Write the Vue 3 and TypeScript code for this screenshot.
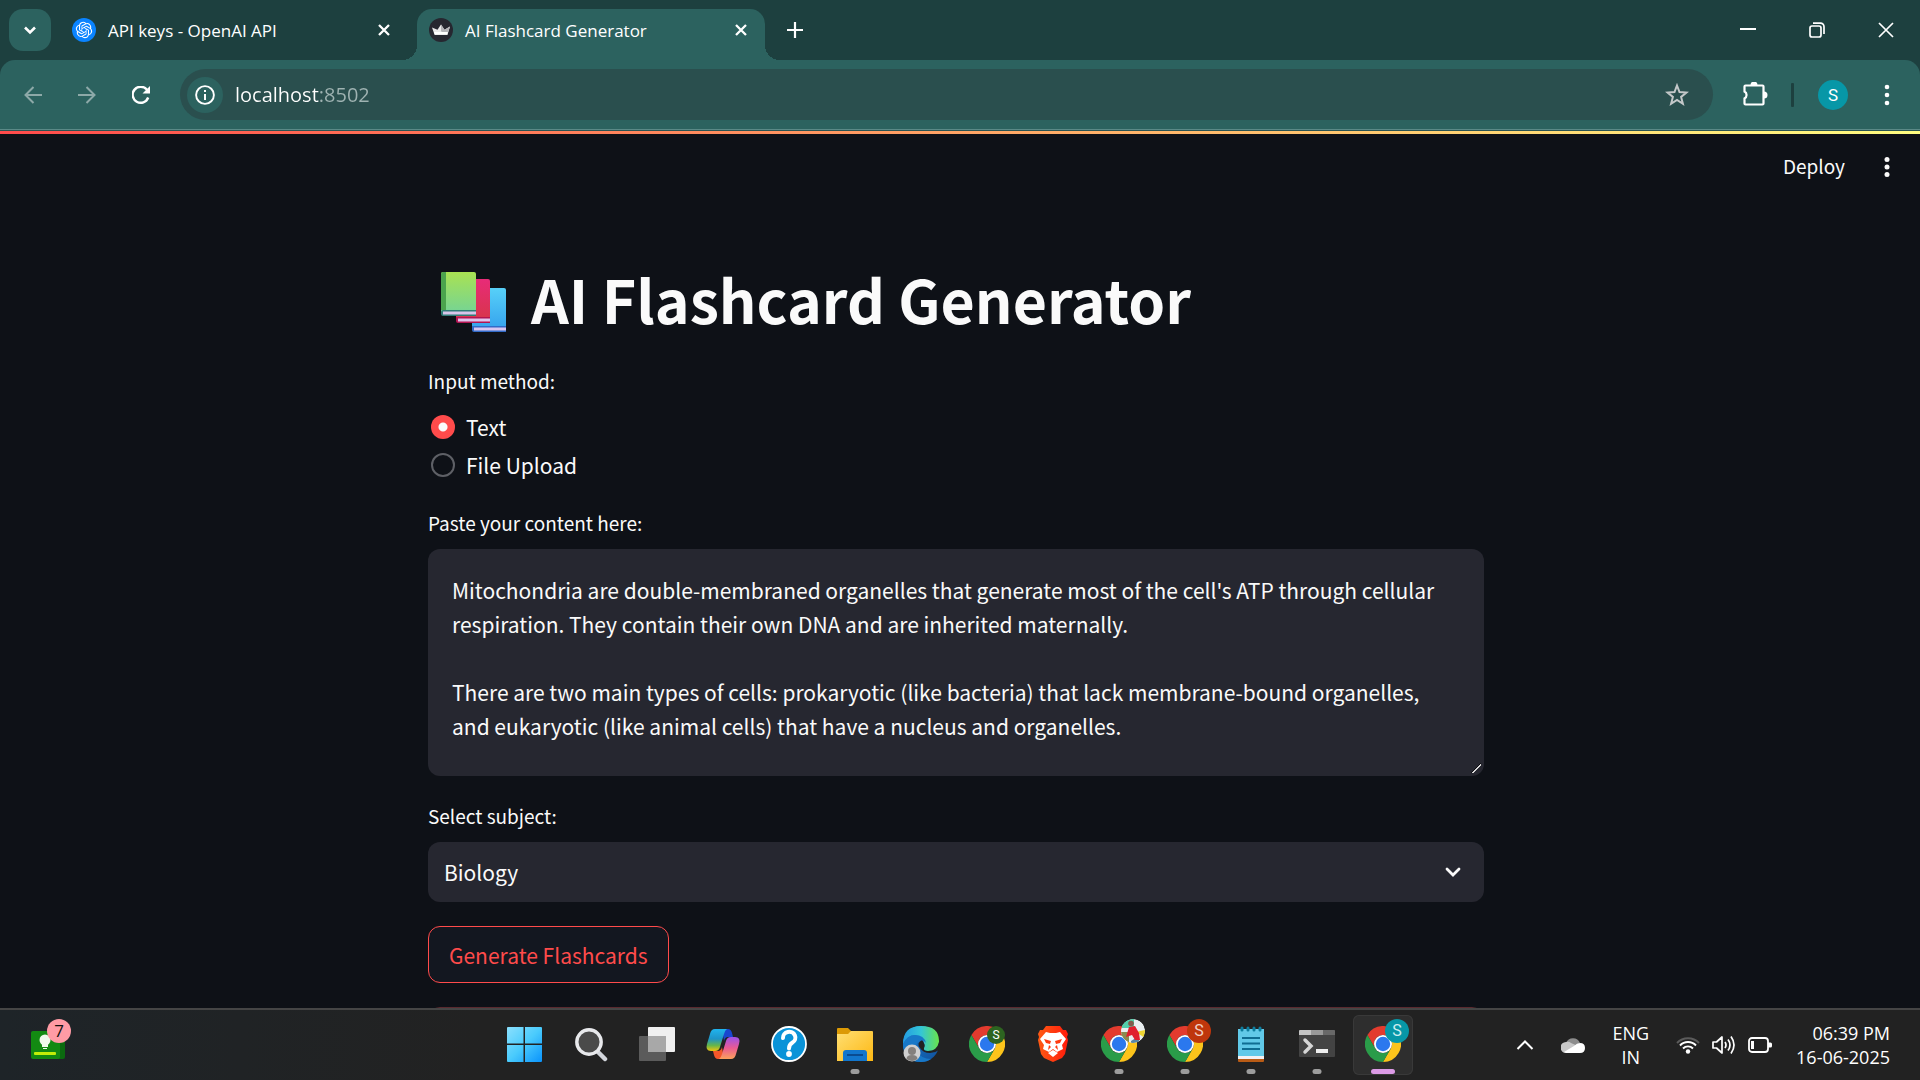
<script setup lang="ts">
import { ref } from 'vue'

interface TaskItem {
  id: string
  label: string
  running?: boolean
  active?: boolean
  badge?: string
  badgeClass?: string
}

const address = ref('localhost:8502')
const method = ref('Text')
const methods: string[] = ['Text', 'File Upload']
const subject = ref('Biology')
const content = ref(
  "Mitochondria are double-membraned organelles that generate most of the cell's ATP through cellular respiration. They contain their own DNA and are inherited maternally.\n\nThere are two main types of cells: prokaryotic (like bacteria) that lack membrane-bound organelles, and eukaryotic (like animal cells) that have a nucleus and organelles."
)

const tasks: TaskItem[] = [
  { id: 'start', label: 'Start' },
  { id: 'search', label: 'Search' },
  { id: 'views', label: 'Task view' },
  { id: 'copilot', label: 'Copilot' },
  { id: 'help', label: 'Get help' },
  { id: 'folder', label: 'File Explorer', running: true },
  { id: 'edge', label: 'Edge' },
  { id: 'chrome', label: 'Chrome', badge: 'S', badgeClass: 'small' },
  { id: 'brave', label: 'Brave' },
  { id: 'chrome', label: 'Chrome, photo profile', running: true, badge: 'photo', badgeClass: 'photo' },
  { id: 'chrome', label: 'Chrome, second profile', running: true, badge: 'S', badgeClass: 'rust' },
  { id: 'notepad', label: 'Notepad', running: true },
  { id: 'terminal', label: 'Terminal', running: true },
  { id: 'chrome', label: 'Chrome, current profile', running: true, active: true, badge: 'S', badgeClass: 'teal' }
]
</script>

<template>
  <div class="screen">
    <header class="browser">
      <div class="strip">
        <button class="tab-search" aria-label="Search tabs">
          <svg width="16" height="16" viewBox="0 0 16 16"><path d="M3 5.500l5 5 5-5" fill="none" stroke="#fff" stroke-width="2.600" /></svg>
        </button>
        <div class="tab">
          <svg class="favicon" viewBox="0 0 24 24">
            <circle cx="12" cy="12" r="12" fill="#0a84ff" />
            <g transform="translate(3.800 3.800) scale(.683)"><path fill="#fff" d="M22.2819 9.8211a5.9847 5.9847 0 0 0-.5157-4.9108 6.0462 6.0462 0 0 0-6.5098-2.9A6.0651 6.0651 0 0 0 4.9807 4.1818a5.9847 5.9847 0 0 0-3.9977 2.9 6.0462 6.0462 0 0 0 .7427 7.0966 5.98 5.98 0 0 0 .511 4.9107 6.051 6.051 0 0 0 6.5146 2.9001A5.9847 5.9847 0 0 0 13.2599 24a6.0557 6.0557 0 0 0 5.7718-4.2058 5.9894 5.9894 0 0 0 3.9977-2.9001 6.0557 6.0557 0 0 0-.7475-7.0729zm-9.022 12.6081a4.4755 4.4755 0 0 1-2.8764-1.0408l.1419-.0804 4.7783-2.7582a.7948.7948 0 0 0 .3927-.6813v-6.7369l2.02 1.1686a.071.071 0 0 1 .038.052v5.5826a4.504 4.504 0 0 1-4.4945 4.4944zm-9.6607-4.1254a4.4708 4.4708 0 0 1-.5346-3.0137l.142.0852 4.783 2.7582a.7712.7712 0 0 0 .7806 0l5.8428-3.3685v2.3324a.0804.0804 0 0 1-.0332.0615L9.74 19.9502a4.4992 4.4992 0 0 1-6.1408-1.6464zM2.3408 7.8956a4.485 4.485 0 0 1 2.3655-1.9728V11.6a.7664.7664 0 0 0 .3879.6765l5.8144 3.3543-2.0201 1.1685a.0757.0757 0 0 1-.071 0l-4.8303-2.7865A4.504 4.504 0 0 1 2.3408 7.872zm16.5963 3.8558L13.1038 8.364 15.1192 7.2a.0757.0757 0 0 1 .071 0l4.8303 2.7913a4.4944 4.4944 0 0 1-.6765 8.1042v-5.6772a.79.79 0 0 0-.407-.667zm2.0107-3.0231l-.142-.0852-4.7735-2.7818a.7759.7759 0 0 0-.7854 0L9.409 9.2297V6.8974a.0662.0662 0 0 1 .0284-.0615l4.8303-2.7866a4.4992 4.4992 0 0 1 6.6802 4.66zM8.3065 12.863l-2.02-1.1638a.0804.0804 0 0 1-.038-.0567V6.0742a4.4992 4.4992 0 0 1 7.3757-3.4537l-.142.0805L8.704 5.459a.7948.7948 0 0 0-.3927.6813zm1.0976-2.3654l2.602-1.4998 2.6069 1.4998v2.9994l-2.5974 1.4997-2.6067-1.4997Z" /></g>
          </svg>
          <span class="tab-title">API keys - OpenAI API</span>
          <button class="tab-close" aria-label="Close tab">
            <svg width="12" height="12" viewBox="0 0 12 12"><path d="M1 1l10 10M11 1L1 11" stroke="#fff" stroke-width="2.300" /></svg>
          </button>
        </div>
        <div class="tab current">
          <svg class="favicon" viewBox="0 0 24 24">
            <circle cx="12" cy="12" r="12" fill="#262730" />
            <path d="M3 9.500l5.500 2.200L12 6.500l3.500 5.200L21 8.500l-2.600 8.300H5.600z" fill="#e9e9ea" />
            <path d="M21 8.500l-5.500 3.200L12 6.500V13l3 3.800h3.400z" fill="#b4b4b8" />
            <path d="M5 14h14l-.8 2.800H5.800z" fill="#fff" />
          </svg>
          <span class="tab-title">AI Flashcard Generator</span>
          <button class="tab-close" aria-label="Close tab">
            <svg width="12" height="12" viewBox="0 0 12 12"><path d="M1 1l10 10M11 1L1 11" stroke="#fff" stroke-width="2.300" /></svg>
          </button>
        </div>
        <button class="new-tab" aria-label="New tab">
          <svg width="16" height="16" viewBox="0 0 16 16"><path d="M8 0v16M0 8h16" stroke="#fff" stroke-width="2.200" /></svg>
        </button>
        <div class="window-buttons">
          <button aria-label="Minimize"><svg width="16" height="16" viewBox="0 0 16 16"><path d="M0 7h16" stroke="#fff" stroke-width="2" /></svg></button>
          <button aria-label="Restore"><svg width="16" height="16" viewBox="0 0 16 16" fill="none" stroke="#fff" stroke-width="1.700"><rect x="1" y="4" width="11" height="11" rx="2" /><path d="M4 1.200h7.500a3.500 3.500 0 0 1 3.500 3.500V12" /></svg></button>
          <button aria-label="Close"><svg width="16" height="16" viewBox="0 0 16 16"><path d="M1 1l14 14M15 1L1 15" stroke="#fff" stroke-width="1.700" /></svg></button>
        </div>
      </div>
      <div class="toolbar">
        <button class="nav dim" aria-label="Back"><svg width="18" height="18" viewBox="0 0 18 18" fill="none" stroke="#8da9a8" stroke-width="2"><path d="M18 9H1.500M9.500 1L1.500 9l8 8" /></svg></button>
        <button class="nav dim" aria-label="Forward"><svg width="18" height="18" viewBox="0 0 18 18" fill="none" stroke="#8da9a8" stroke-width="2"><path d="M0 9h16.500M8.500 1l8 8-8 8" /></svg></button>
        <button class="nav" aria-label="Reload"><svg width="18" height="18" viewBox="0 0 18 18"><path d="M16.200 11.500A8 8 0 1 1 14.800 3.600L17 6" fill="none" stroke="#fff" stroke-width="2.400" /><path d="M18 0v7.500h-7.500z" fill="#fff" /></svg></button>
        <div class="address">
          <button class="site-info" aria-label="Site information"><svg width="20" height="20" viewBox="0 0 20 20"><circle cx="10" cy="10" r="8.900" fill="none" stroke="#fff" stroke-width="1.900" /><path d="M9 9h2v6H9zM9 5h2v2H9z" fill="#fff" /></svg></button>
          <input v-model="address" class="url" type="text" aria-label="Address" />
          <button class="star" aria-label="Bookmark"><svg width="24" height="24" viewBox="0 0 24 24"><path d="M12 2.500l2.500 6.500 7 .5-5.400 4.400 1.800 6.900-5.900-3.800-5.900 3.800 1.800-6.900L2.500 9.500l7-.5z" fill="none" stroke="#c4c8c9" stroke-width="2" /></svg></button>
        </div>
        <button class="puzzle" aria-label="Extensions"><svg width="26" height="26" viewBox="0 0 26 26"><path d="M3.500 3.500h17a1 1 0 0 1 1 1v17a1 1 0 0 1-1 1h-17a1 1 0 0 1-1-1v-5a4 4 0 0 0 0-7v-5a1 1 0 0 1 1-1z" fill="none" stroke="#fff" stroke-width="2.200" /><path d="M8.500 3a3.500 3.500 0 0 1 7 0zM22 9.500a3.500 3.500 0 0 1 0 7z" fill="#fff" /></svg></button>
        <span class="divider"></span>
        <button class="avatar" aria-label="Profile">S</button>
        <button class="menu" aria-label="Browser menu"><svg width="6" height="22" viewBox="0 0 6 22" fill="#fff"><circle cx="3" cy="3" r="2.300" /><circle cx="3" cy="11" r="2.300" /><circle cx="3" cy="19" r="2.300" /></svg></button>
      </div>
    </header>

    <main class="page">
      <div class="decoration"></div>
      <div class="app-bar">
        <button class="deploy">Deploy</button>
        <button class="app-menu" aria-label="Main menu"><svg width="6" height="22" viewBox="0 0 6 22" fill="#fafafa"><circle cx="3" cy="3.500" r="2.500" /><circle cx="3" cy="11" r="2.500" /><circle cx="3" cy="18.500" r="2.500" /></svg></button>
      </div>
      <form class="block" @submit.prevent>
        <h1>
          <svg class="books" width="66" height="62" viewBox="0 0 66 62">
            <defs>
              <linearGradient id="bookGreen" x1="0" y1="0" x2="0" y2="1"><stop offset="0" stop-color="#a9e252" /><stop offset="1" stop-color="#76d493" /></linearGradient>
              <linearGradient id="bookBlue" x1="0" y1="0" x2="0" y2="1"><stop offset="0" stop-color="#57d0f8" /><stop offset="1" stop-color="#36a4ee" /></linearGradient>
              <linearGradient id="bookRed" x1="0" y1="0" x2="0" y2="1"><stop offset="0" stop-color="#e82b78" /><stop offset="1" stop-color="#d8354b" /></linearGradient>
            </defs>
            <path d="M31 17h32q2 0 2 2v38H31z" fill="url(#bookBlue)" />
            <path d="M31 55h34v6H33q-2 0-2-2z" fill="#316bc8" /><path d="M33 56.500h32v3H33z" fill="#d8c5f1" />
            <path d="M15 8h32q2 0 2 2v38H15z" fill="url(#bookRed)" />
            <path d="M15 46h34v6H17q-2 0-2-2z" fill="#b31451" /><path d="M17 47.500h32v3H17z" fill="#dfc3ec" />
            <path d="M2 1h31q2 0 2 2v38H0V3q0-2 2-2z" fill="url(#bookGreen)" /><path d="M2 1h3v38H0V3q0-2 2-2z" fill="#4ba34d" />
            <path d="M0 41q0-2 2-2h33v6H2q-2 0-2-2z" fill="#2f7b76" /><path d="M2 40.500h33v3H2z" fill="#d8c5ea" />
          </svg>
          <span>AI Flashcard Generator</span>
        </h1>

        <fieldset class="radios">
          <legend>Input method:</legend>
          <label v-for="option in methods" :key="option" class="radio">
            <input v-model="method" type="radio" name="method" :value="option" />
            <span>{{ option }}</span>
          </label>
        </fieldset>

        <div class="field">
          <label for="content">Paste your content here:</label>
          <textarea id="content" v-model="content" spellcheck="false"></textarea>
        </div>

        <div class="field">
          <label for="subject">Select subject:</label>
          <div class="select">
            <select id="subject" v-model="subject">
              <option>Biology</option>
            </select>
            <svg class="chevron" width="16" height="10" viewBox="0 0 16 10"><path d="M2 2l6 6 6-6" fill="none" stroke="#fafafa" stroke-width="2.800" stroke-linecap="round" /></svg>
          </div>
        </div>

        <button class="generate" type="submit">Generate Flashcards</button>
        <div class="notice"></div>
      </form>
    </main>

    <footer class="taskbar">
      <div class="widgets">
        <button class="widget" aria-label="Widgets">
          <svg width="34" height="28" viewBox="0 0 34 28">
            <rect x="2" width="32" height="28" rx="2" fill="#0b6a0f" /><rect width="29" height="28" rx="2" fill="#138a12" />
            <circle cx="14" cy="9" r="5.500" fill="#f0faec" /><path d="M11 12h6v4h-6zM12 17h4v1h-4z" fill="#f0faec" />
            <rect x="3" y="21" width="22" height="3" rx="1" fill="#c3ee08" />
          </svg>
          <span class="count">7</span>
        </button>
      </div>

      <nav class="tasks">
        <button v-for="(task, index) in tasks" :key="index" class="task" :class="{ active: task.active }" :aria-label="task.label">
          <svg v-if="task.id === 'start'" width="36" height="36" viewBox="0 0 36 36">
            <defs><linearGradient id="win" x1="0" y1="0" x2="1" y2="1"><stop offset="0" stop-color="#8be0fd" /><stop offset=".5" stop-color="#4acbfd" /><stop offset="1" stop-color="#0a93fb" /></linearGradient></defs>
            <path fill="url(#win)" d="M0 2q0-1 1-1h15.500v16.500H0zM18 1h16q1 0 1 1v15.500H18zM0 19h16.500v17H1q-1 0-1-1zM18 19h17v16q0 1-1 1H18z" />
          </svg>
          <svg v-else-if="task.id === 'search'" width="36" height="36" viewBox="0 0 36 36">
            <path d="M24 25l8 8" stroke="#d3d6dc" stroke-width="4.500" stroke-linecap="round" /><circle cx="16" cy="16" r="12.200" fill="#4a4a4a" stroke="#e8e9ec" stroke-width="3.400" />
          </svg>
          <svg v-else-if="task.id === 'views'" width="36" height="36" viewBox="0 0 36 36">
            <rect x="9" y="1" width="27" height="25" rx="1" fill="#f0f0f0" /><rect y="10" width="27" height="25" rx="1" fill="#5b5b5b" /><path d="M9 10h18v16H9z" fill="#a8a8a8" />
          </svg>
          <svg v-else-if="task.id === 'copilot'" width="36" height="36" viewBox="0 0 36 36">
            <defs>
              <linearGradient id="copA" x1="0" y1="0" x2="0" y2="1"><stop offset="0" stop-color="#20b4ee" /><stop offset=".45" stop-color="#1e94c8" /><stop offset=".75" stop-color="#67b64a" /><stop offset="1" stop-color="#f1c40d" /></linearGradient>
              <linearGradient id="copB" x1="0" y1="0" x2="0" y2="1"><stop offset="0" stop-color="#9b52ea" /><stop offset=".5" stop-color="#ea5b92" /><stop offset="1" stop-color="#fba15b" /></linearGradient>
            </defs>
            <path d="M17 3h6q3 0 4 4l1 4h-5q-3 0-4 4z" fill="#1945cf" />
            <path d="M19 33h-6q-3 0-4-4l-1-4h5q3 0 4-4z" fill="#f4572a" />
            <path d="M10 3h12q-2 1-3 5l-4 13q-1 4-5 4H6q-6 0-4-7l3-10q1-5 5-5z" fill="url(#copA)" />
            <path d="M26 33H14q2-1 3-5l4-13q1-4 5-4h4q6 0 4 7l-3 10q-1 5-5 5z" fill="url(#copB)" />
          </svg>
          <svg v-else-if="task.id === 'help'" width="36" height="36" viewBox="0 0 36 36">
            <circle cx="18" cy="18" r="17" fill="#0a93d8" stroke="#fff" stroke-width="1.800" /><path d="M12 12a6.200 5.800 0 1 1 9.500 4.500Q18 18.500 18 22.500" fill="none" stroke="#fff" stroke-width="4" stroke-linecap="round" /><circle cx="18" cy="28" r="2.900" fill="#fff" />
          </svg>
          <svg v-else-if="task.id === 'folder'" width="36" height="36" viewBox="0 0 36 36">
            <defs><linearGradient id="fold" x1="0" y1="0" x2="1" y2="1"><stop offset="0" stop-color="#ffdf73" /><stop offset="1" stop-color="#fdb813" /></linearGradient></defs>
            <path d="M0 3q0-1 1-1h10l4 4v3H0z" fill="#dc9a05" /><path d="M0 8h11l3-3h21q1 0 1 1v29H0z" fill="url(#fold)" /><path d="M6 35V27q0-3 3-3h18q3 0 3 3v8z" fill="#1276cd" /><path d="M10 29h16" stroke="#0a4b91" stroke-width="2" />
          </svg>
          <svg v-else-if="task.id === 'edge'" width="36" height="36" viewBox="0 0 36 36">
            <defs>
              <linearGradient id="edgeA" x1="0" y1="0" x2="1" y2="0"><stop offset="0" stop-color="#239be3" /><stop offset=".5" stop-color="#34c6d6" /><stop offset="1" stop-color="#69e34b" /></linearGradient>
              <linearGradient id="edgeB" x1="0" y1="0" x2="1" y2="1"><stop offset="0" stop-color="#177fd3" /><stop offset="1" stop-color="#11509b" /></linearGradient>
            </defs>
            <circle cx="18" cy="18" r="18" fill="url(#edgeB)" />
            <path d="M0 18Q0 0 18 0t18 15q0 10-11 10-5 0-4-3 2-8-6-12-9-3-15 8z" fill="url(#edgeA)" />
            <path d="M19 14q-6 3-2 8 3 5 10 5 5 0 9-3V16q-2 9-11 9-5 0-4-3 2-3-2-8z" fill="#222" />
            <path d="M0 18q4-9 12-9 9 0 11 8-3-4-6-2-6 3-3 10 4 8 14 8-4 3-10 3Q0 36 0 18z" fill="#1878c8" />
            <circle cx="9" cy="27" r="8.500" fill="#d0d0d0" /><circle cx="9" cy="25" r="4" fill="#84807d" /><path d="M3.500 33q0-4 5.500-4t5.500 4q-5.500 4-11 0z" fill="#84807d" />
          </svg>
          <svg v-else-if="task.id === 'brave'" width="36" height="36" viewBox="0 0 36 36">
            <defs><linearGradient id="brave" x1="0" y1="0" x2="1" y2="0"><stop offset="0" stop-color="#ff5b14" /><stop offset="1" stop-color="#ff1b0b" /></linearGradient></defs>
            <path d="M11 0h14l3 4h3l2 4-1 3 1 3-3 14-3 4-9 4-9-4-3-4L3 14l1-3-1-3 2-4h3z" fill="url(#brave)" />
            <path d="M11 6l4 1h6l4-1 6 7-4 6 1 4-6 3-4-3-4 3-6-3 1-4-4-6z" fill="#fff" />
            <path d="M9 13l7 2-1 3-4-1zM27 13l-7 2 1 3 4-1zM14 19l2 2-3 3zM22 19l-2 2 3 3z" fill="#ff3b10" />
            <path d="M13 27l5-3 5 3-5 4z" fill="#fff" />
          </svg>
          <svg v-else-if="task.id === 'notepad'" width="36" height="36" viewBox="0 0 36 36">
            <path d="M5 3h26v28H5z" fill="#61c9e8" /><path d="M5 30h26v3H5z" fill="#f3f1f2" /><path d="M5 33h26v2q0 1-1 1H6q-1 0-1-1z" fill="#b95b15" />
            <path d="M9 2v2M15 2v2M21 2v2M27 2v2" stroke="#0e7d9e" stroke-width="3" stroke-linecap="round" /><path d="M9 12h18M9 17.500h18M9 23h18" stroke="#0f6d92" stroke-width="2" />
          </svg>
          <svg v-else-if="task.id === 'terminal'" width="36" height="36" viewBox="0 0 36 36">
            <rect y="4" width="36" height="27" rx="1" fill="#434343" /><path d="M0 5q0-1 1-1h11v5H0z" fill="#c4c4c4" /><path d="M12 4h12v5H12z" fill="#999" /><path d="M24 4h11q1 0 1 1v4H24z" fill="#686868" />
            <path d="M6 14l6 6-6 6" fill="none" stroke="#d7d7d7" stroke-width="3.500" stroke-linecap="round" /><path d="M17 23h12v4H17z" fill="#efefef" />
          </svg>
          <svg v-else width="36" height="36" viewBox="0 0 48 48">
            <path d="M3.200 12A24 24 0 0 1 44.800 12H24A12 12 0 0 0 13.600 30z" fill="#e33b2e" />
            <path d="M44.800 12A24 24 0 0 1 24 48L34.400 30A12 12 0 0 0 24 12z" fill="#fcc41b" />
            <path d="M24 48A24 24 0 0 1 3.200 12L13.600 30A12 12 0 0 0 34.400 30z" fill="#2a9c49" />
            <circle cx="24" cy="24" r="12" fill="#fff" /><circle cx="24" cy="24" r="9.600" fill="#2b78ee" />
          </svg>
          <svg v-if="task.badge === 'photo'" class="badge photo" viewBox="0 0 24 24">
            <defs><clipPath id="round"><circle cx="12" cy="12" r="12" /></clipPath></defs>
            <g clip-path="url(#round)"><path d="M0 0h24v24H0z" fill="#e9eef0" /><path d="M0 0h13v9H0z" fill="#51cfaa" /><path d="M0 13h8v11H0z" fill="#8d8a50" /><path d="M15 13l9-2v8z" fill="#eed533" /><path d="M10 22l8-5v7h-8z" fill="#5a86a5" /><path d="M8 8l6-1 4 7 1 7h-5l-3-5-6 2z" fill="#e01f2e" /><circle cx="10" cy="4.500" r="2.800" fill="#835a4b" /></g>
          </svg>
          <span v-else-if="task.badge" class="badge" :class="task.badgeClass">{{ task.badge }}</span>
          <span v-if="task.running" class="running"></span>
        </button>
      </nav>

      <div class="tray">
        <button class="tray-item overflow" aria-label="Show hidden icons"><svg width="18" height="10" viewBox="0 0 18 10"><path d="M1.500 9L9 1.500 16.500 9" fill="none" stroke="#fff" stroke-width="2" /></svg></button>
        <button class="tray-item cloud" aria-label="OneDrive"><svg width="24" height="16" viewBox="0 0 24 16"><path d="M5 6a7.500 7.500 0 0 1 14 0l-6 6z" fill="#8d8d8d" /><path d="M5 5q3-1 5 1l9 4-4 6H5A5.500 5.500 0 0 1 5 5z" fill="#c8c8c8" /><path d="M3 15l10-6q3-3 6-3 5 0 5 5t-5 5H5z" fill="#fff" /></svg></button>
        <button class="tray-item lang"><span>ENG</span><span>IN</span></button>
        <button class="tray-item status" aria-label="Network, volume and battery">
          <svg width="24" height="18" viewBox="0 0 24 18" fill="none" stroke-width="1.900"><path d="M1 7a15 15 0 0 1 22 0" stroke="#5b5b5b" /><path d="M4 9.500a11 11 0 0 1 16 0M7 12.500a7 7 0 0 1 10 0" stroke="#fff" /><circle cx="12" cy="15.500" r="2.200" fill="#fff" /></svg>
          <svg width="24" height="20" viewBox="0 0 24 20" fill="none" stroke="#fff" stroke-width="1.700"><path d="M1 7h3.500L10 2v16l-5.500-5H1z" stroke-linejoin="round" /><path d="M13 7q2 3 0 6M16 4.500q4 5.500 0 11M19 1.500q6 8.500 0 17" /></svg>
          <svg width="24" height="16" viewBox="0 0 24 16"><rect x="1" y="1" width="19" height="14" rx="3" fill="none" stroke="#fff" stroke-width="1.800" /><path d="M3 4h3v8H3zM20 5.500h2.500q1.500 0 1.500 1.500v2q0 1.500-1.500 1.500H20z" fill="#fff" /></svg>
        </button>
        <button class="tray-item clock"><span>06:39 PM</span><span>16-06-2025</span></button>
      </div>
    </footer>
  </div>
</template>

<style>
body {
  margin: 0;
  background: #0e1117;
}
</style>

<style scoped>
.screen {
  display: flex;
  flex-direction: column;
  height: 100vh;
  overflow: hidden;
  color: #fff;
  font-family: "Open Sans", "Noto Sans", sans-serif;
}
*, *::before, *::after { box-sizing: border-box; }
button {
  display: flex;
  align-items: center;
  justify-content: center;
  padding: 0;
  border: 0;
  background: none;
  color: inherit;
  font: inherit;
}
svg { display: block; flex: none; }

/* Browser frame */
.browser { flex: none; background: #1d403f; }
.strip { display: flex; align-items: center; height: 60px; padding-left: 9px; }
.tab-search { width: 42px; height: 42px; border-radius: 14px; background: #2c625f; }
.tab { display: flex; align-items: center; width: 348px; height: 51px; margin-top: 9px; padding: 0 18px 9px 12px; }
.tab:not(.current) { margin-left: 9px; }
.tab.current { position: relative; margin-left: 9px; border-radius: 15px 15px 0 0; background: #2c625f; }
.tab.current::before,
.tab.current::after { content: ""; position: absolute; bottom: 0; width: 15px; height: 15px; }
.tab.current::before { right: 100%; background: radial-gradient(circle at 0 0, transparent 15px, #2c625f 15px); }
.tab.current::after { left: 100%; background: radial-gradient(circle at 100% 0, transparent 15px, #2c625f 15px); }
.favicon { width: 24px; height: 24px; }
.tab-title { flex: 1; margin-left: 12px; padding-top: 2px; font-size: 17px; line-height: 24px; white-space: nowrap; }
.new-tab { width: 42px; height: 42px; margin-left: 9px; }
.window-buttons { display: flex; align-self: stretch; margin-left: auto; }
.window-buttons button { width: 69px; }
.toolbar {
  display: flex;
  align-items: center;
  height: 71px;
  padding: 0 18px 2px 6px;
  border-radius: 15px 15px 0 0;
  background: linear-gradient(#2c625f, #2c625f) 0 0 / 100% 69px no-repeat, linear-gradient(#5b8987 50%, #2a5453 50%) 0 69px / 100% 2px no-repeat;
}
.nav { width: 54px; height: 54px; }
.address { display: flex; flex: 1; align-items: center; height: 51px; margin-left: 12px; padding: 0 24px 0 7px; border-radius: 26px; background: #2a4f4e; }
.site-info { width: 36px; height: 36px; border-radius: 50%; background: #2c625f; }
.url {
  flex: 1;
  min-width: 0;
  margin-left: 12px;
  padding: 0;
  border: 0;
  outline: 0;
  background: linear-gradient(90deg, #fff 84px, #9fb3b2 84px);
  background-clip: text;
  color: #fff;
  -webkit-text-fill-color: transparent;
  font: 20px/32px "Open Sans", sans-serif;
}
.puzzle { width: 54px; height: 54px; margin-left: 15px; }
.divider { width: 3px; height: 24px; margin: 0 24px 0 9px; border-radius: 1px; background: #1d403f; }
.avatar { width: 30px; height: 30px; border-radius: 50%; background: #0797a7; font: 17px/30px Roboto, sans-serif; }
.menu { width: 42px; height: 42px; margin-left: 18px; margin-right: -6px; }

/* Page */
.page {
  flex: 1;
  min-height: 0;
  overflow: hidden;
  background: #0e1117;
  color: #fafafa;
  font-family: "Noto Sans CJK JP", "Noto Sans CJK SC", sans-serif;
}
.decoration { height: 3px; background: linear-gradient(90deg, #ff4b4b, #fffd80); }
.app-bar { display: flex; align-items: center; justify-content: flex-end; height: 66px; padding-right: 12px; }
.deploy { padding-bottom: 2px; font-size: 19px; line-height: 30px; }
.app-menu { width: 42px; height: 42px; margin-left: 21px; }
.block { display: flex; flex-direction: column; max-width: 1064px; margin: 0 auto; padding: 60px 8px 0 0; }
h1 { display: flex; align-items: center; gap: 24px; margin: 0 0 21px; padding-left: 13px; font-size: 59px; font-weight: 700; line-height: 78px; white-space: nowrap; }
h1 span { padding-bottom: 6px; }
.radios { display: flex; flex-direction: column; gap: 2px; margin: 0 0 24px; padding: 0; border: 0; }
legend, .field > label { display: block; padding: 0; font-size: 19px; line-height: 32px; }
legend { margin-bottom: 12px; }
.field > label { margin-bottom: 10px; }
.radio { display: flex; align-items: center; gap: 11px; padding-left: 3px; font-size: 21px; line-height: 36px; }
.radio input { appearance: none; width: 24px; height: 24px; margin: 0; border: 2px solid #5e6066; border-radius: 50%; }
.radio input:checked { border: 0; background: radial-gradient(circle, #fafafa 4px, #ff4b4b 5px); }
.field { margin-bottom: 24px; }
textarea {
  display: block;
  width: 100%;
  height: 227px;
  padding: 24px;
  border: 0;
  border-radius: 12px;
  outline: 0;
  background: #262730;
  color: #fafafa;
  font-family: inherit;
  font-size: 21px;
  line-height: 34px;
  resize: vertical;
  overflow: hidden;
}
textarea::-webkit-resizer {
  background: linear-gradient(135deg, transparent 45%, #0c0c10 45% 52%, #d8d8d8 52% 60%, transparent 60%) 2px 2px / 10px 10px no-repeat;
}
.select { position: relative; }
select {
  display: block;
  width: 100%;
  height: 60px;
  padding: 0 16px;
  border: 0;
  border-radius: 12px;
  appearance: none;
  background: #262730;
  color: #fafafa;
  font-family: inherit;
  font-size: 21px;
}
.chevron { position: absolute; top: 25px; right: 23px; pointer-events: none; }
.generate { align-self: flex-start; height: 57px; margin-bottom: 24px; padding: 0 20px; border: 1px solid #ff4b4b; border-radius: 12px; background: #131720; color: #ff4b4b; font-size: 21px; }
.notice { height: 60px; border: 1px solid #5a2a2f; border-radius: 12px; }

/* Taskbar */
.taskbar {
  display: grid;
  grid-template-columns: 1fr auto 1fr;
  flex: none;
  height: 72px;
  padding-right: 12px;
  border-top: 2px solid #454545;
  background: linear-gradient(90deg, #1e2428, #222 25%);
}
.widgets { display: flex; align-items: center; padding-left: 31px; }
.widget { position: relative; }
.count { position: absolute; top: -12px; left: 16px; width: 24px; height: 24px; border-radius: 50%; background: #ff9ba5; color: #111; font-size: 17px; line-height: 24px; text-align: center; }
.tasks { display: flex; gap: 6px; align-items: center; }
.task { position: relative; width: 60px; height: 60px; padding-bottom: 2px; border-radius: 6px; }
.task.active { background: #2e2e2e; box-shadow: inset 0 0 0 1px #393939; }
.running { position: absolute; bottom: 1px; left: 50%; width: 9px; height: 5px; border-radius: 3px; background: #9d9d9d; transform: translateX(-50%); }
.active .running { width: 24px; background: #dc9be6; }
.badge { position: absolute; top: 4px; right: 4px; width: 24px; height: 24px; border-radius: 50%; font: 16px/24px Roboto, sans-serif; text-align: center; }
.badge.small { top: 11px; right: 12px; width: 18px; height: 18px; background: #2d6420; font-size: 12px; line-height: 18px; }
.badge.rust { background: #bf360c; color: #f0d0c5; }
.badge.teal { background: #0797a7; color: #cdeef0; }
.tray { display: flex; align-items: center; justify-content: flex-end; padding-right: 18px; }
.cloud { margin-left: 27px; }
.lang { flex-direction: column; margin-left: 27px; }
.status { gap: 12px; margin-left: 27px; }
.clock { flex-direction: column; align-items: flex-end; margin-left: 24px; }
.lang span, .clock span { font-size: 18px; line-height: 24px; }
</style>
